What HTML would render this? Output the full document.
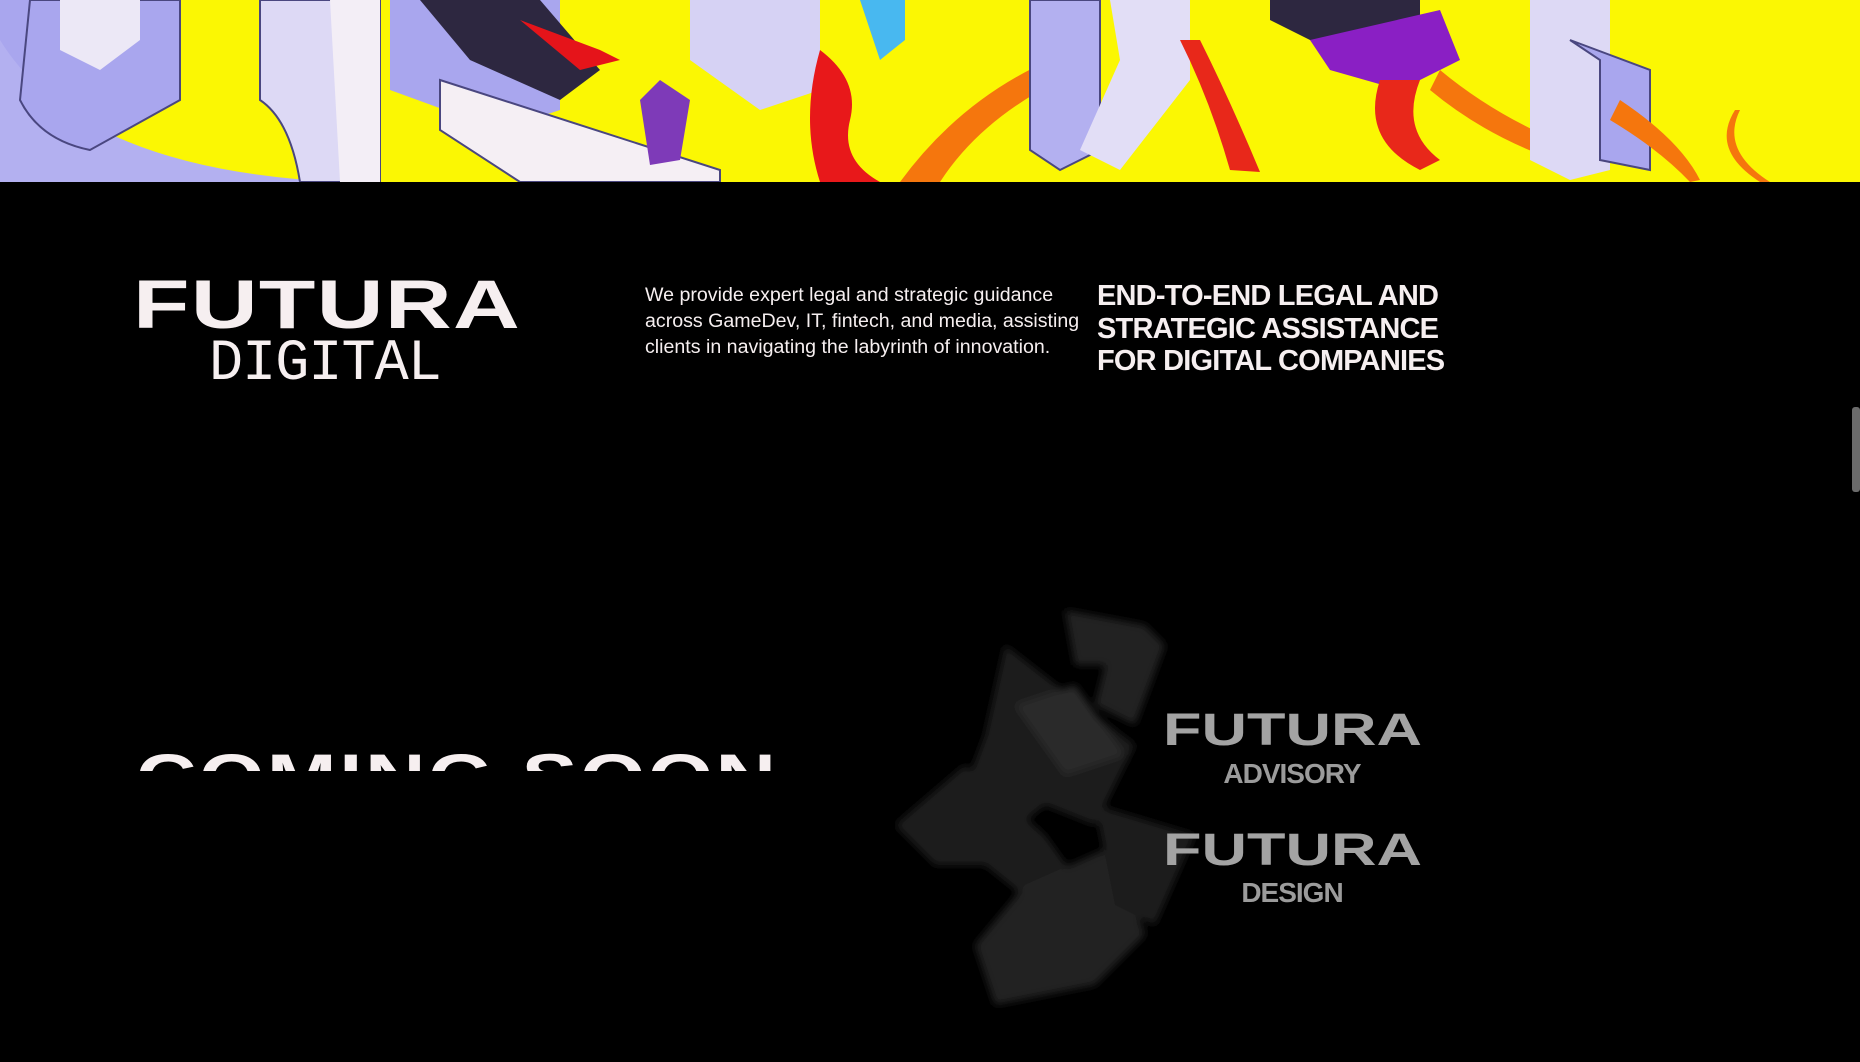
<!DOCTYPE html>
<html><head><meta charset="utf-8"><style>
*{margin:0;padding:0;box-sizing:border-box}
body{width:1860px;height:1062px;background:#000;overflow:hidden;position:relative;font-family:"Liberation Sans",sans-serif;color:#f6eff0}
.abs{position:absolute;white-space:nowrap}
.wide{transform-origin:0 0;font-weight:bold}
</style></head><body>
<svg class="abs" style="left:0;top:0" width="1860" height="182" viewBox="0 0 1860 182">
<rect width="1860" height="182" fill="#fbf703"/>
<path d="M0 0H120V60L60 100L0 130Z" fill="#a9a6ee"/>
<path d="M0 40Q80 170 340 182H0Z" fill="#b3b0f0"/>
<path d="M30 0H180V100L90 150Q40 140 20 100Z" fill="#a9a6ee" stroke="#4a4780" stroke-width="2"/>
<path d="M60 0H140V40L100 70L60 50Z" fill="#ece8f6"/>
<path d="M260 0H380V182H300Q290 120 260 100Z" fill="#ddd9f5" stroke="#4a4780" stroke-width="2"/>
<path d="M330 0H380V182H340Z" fill="#f3eef6"/>
<path d="M390 0H560V110L500 130L390 90Z" fill="#a9a6ee"/>
<path d="M440 80L720 170V182H520L440 130Z" fill="#f5eff4" stroke="#4a4780" stroke-width="2"/>
<path d="M420 0H540L600 70L560 100L470 60Z" fill="#2d2740"/>
<path d="M520 20L600 50L620 60L580 70Z" fill="#e5141a"/>
<path d="M660 80L690 100L680 160L650 165L640 100Z" fill="#7e3ab8"/>
<path d="M690 0H820V90L760 110L690 60Z" fill="#d6d2f4"/>
<path d="M860 0H905V40L880 60Z" fill="#48b8f0"/>
<path d="M820 50Q860 80 850 120Q840 160 880 182H820Q800 120 820 50Z" fill="#e8181a"/>
<path d="M900 182Q960 100 1050 60L1060 80Q980 120 940 182Z" fill="#f5760d"/>
<path d="M1030 0H1100V150L1060 170L1030 150Z" fill="#b3b0f0" stroke="#4a4780" stroke-width="2"/>
<path d="M1110 0H1190V80L1120 170L1080 150L1120 60Z" fill="#e2def6"/>
<path d="M1180 40Q1210 100 1230 170L1260 172Q1230 100 1200 40Z" fill="#e8281a"/>
<path d="M1270 0H1420V40L1350 60L1270 20Z" fill="#2d2740"/>
<path d="M1310 40L1440 10L1460 60L1400 90L1330 70Z" fill="#8a1fc4"/>
<path d="M1380 80Q1360 140 1420 170L1440 160Q1400 130 1420 80Z" fill="#e8281a"/>
<path d="M1440 70Q1500 120 1580 150L1570 165Q1490 140 1430 90Z" fill="#f5760d"/>
<path d="M1530 0H1610V170L1570 180L1530 160Z" fill="#ddd9f5"/>
<path d="M1570 40L1650 70V170L1600 160V60Z" fill="#a9a6ee" stroke="#4a4780" stroke-width="2"/>
<path d="M1620 100Q1680 140 1700 180L1690 182Q1660 150 1610 120Z" fill="#f5760d"/>
<path d="M1740 110Q1720 150 1770 182H1760Q1710 150 1735 110Z" fill="#f5760d"/>
</svg>

<div class="abs wide" style="left:133px;top:270px;font-size:69px;line-height:70px;letter-spacing:1px;transform:scaleX(1.34);font-weight:900">FUTURA</div>
<div class="abs" style="left:209px;top:336px;font-family:'Liberation Mono',monospace;font-size:58px;line-height:58px;transform:scaleX(0.98);transform-origin:0 0;letter-spacing:-1px">DIGITAL</div>

<div class="abs" style="left:645px;top:282px;font-size:19.6px;line-height:26px;letter-spacing:0">We provide expert legal and strategic guidance<br>across GameDev, IT, fintech, and media, assisting<br>clients in navigating the labyrinth of innovation.</div>

<div class="abs wide" style="left:1097px;top:280px;font-size:29px;line-height:32.5px;transform:scaleX(1.0);letter-spacing:-0.8px">END-TO-END LEGAL AND<br>STRATEGIC ASSISTANCE<br>FOR DIGITAL COMPANIES</div>

<div class="abs" style="left:1852px;top:407px;width:8px;height:85px;background:#6b6b6b;border-radius:3px"></div>

<div class="abs" style="left:136px;top:742px;width:800px;height:29px;overflow:hidden">
<div class="wide" style="font-size:66px;line-height:70px;transform:scaleX(1.27);letter-spacing:2px">COMING SOON</div></div>

<svg class="abs" style="left:895px;top:605px" width="370" height="410" viewBox="0 0 370 410">
<defs><filter id="b"><feGaussianBlur stdDeviation="4"/></filter></defs>
<g filter="url(#b)">
<path d="M170 5L250 20L270 40L240 120L200 100L210 60L180 60Z" fill="#222"/>
<path d="M110 40L200 110L240 140L200 220L150 200L100 240L60 210L90 130Z" fill="#1c1c1c"/>
<path d="M0 220L70 160L150 230L200 300L140 300L90 260L40 260Z" fill="#1e1e1e"/>
<path d="M130 280L220 240L250 330L200 380L100 400L80 340Z" fill="#242424"/>
<path d="M200 200L300 230L260 320L220 300Z" fill="#1a1a1a"/>
<path d="M120 100L180 80L230 150L170 170Z" fill="#2a2a2a"/>
</g></svg>

<div class="abs wide" style="left:1163px;top:707px;font-size:45px;line-height:46px;color:#a3a3a3;transform:scaleX(1.4);font-weight:900">FUTURA</div>
<div class="abs" style="left:1163px;width:258px;text-align:center;top:758px;font-size:28px;font-weight:bold;color:#9b9b9b;letter-spacing:-1px">ADVISORY</div>
<div class="abs wide" style="left:1163px;top:827px;font-size:45px;line-height:46px;color:#a3a3a3;transform:scaleX(1.4);font-weight:900">FUTURA</div>
<div class="abs" style="left:1163px;width:258px;text-align:center;top:877px;font-size:28px;font-weight:bold;color:#9b9b9b;letter-spacing:-1px">DESIGN</div>
</body></html>
